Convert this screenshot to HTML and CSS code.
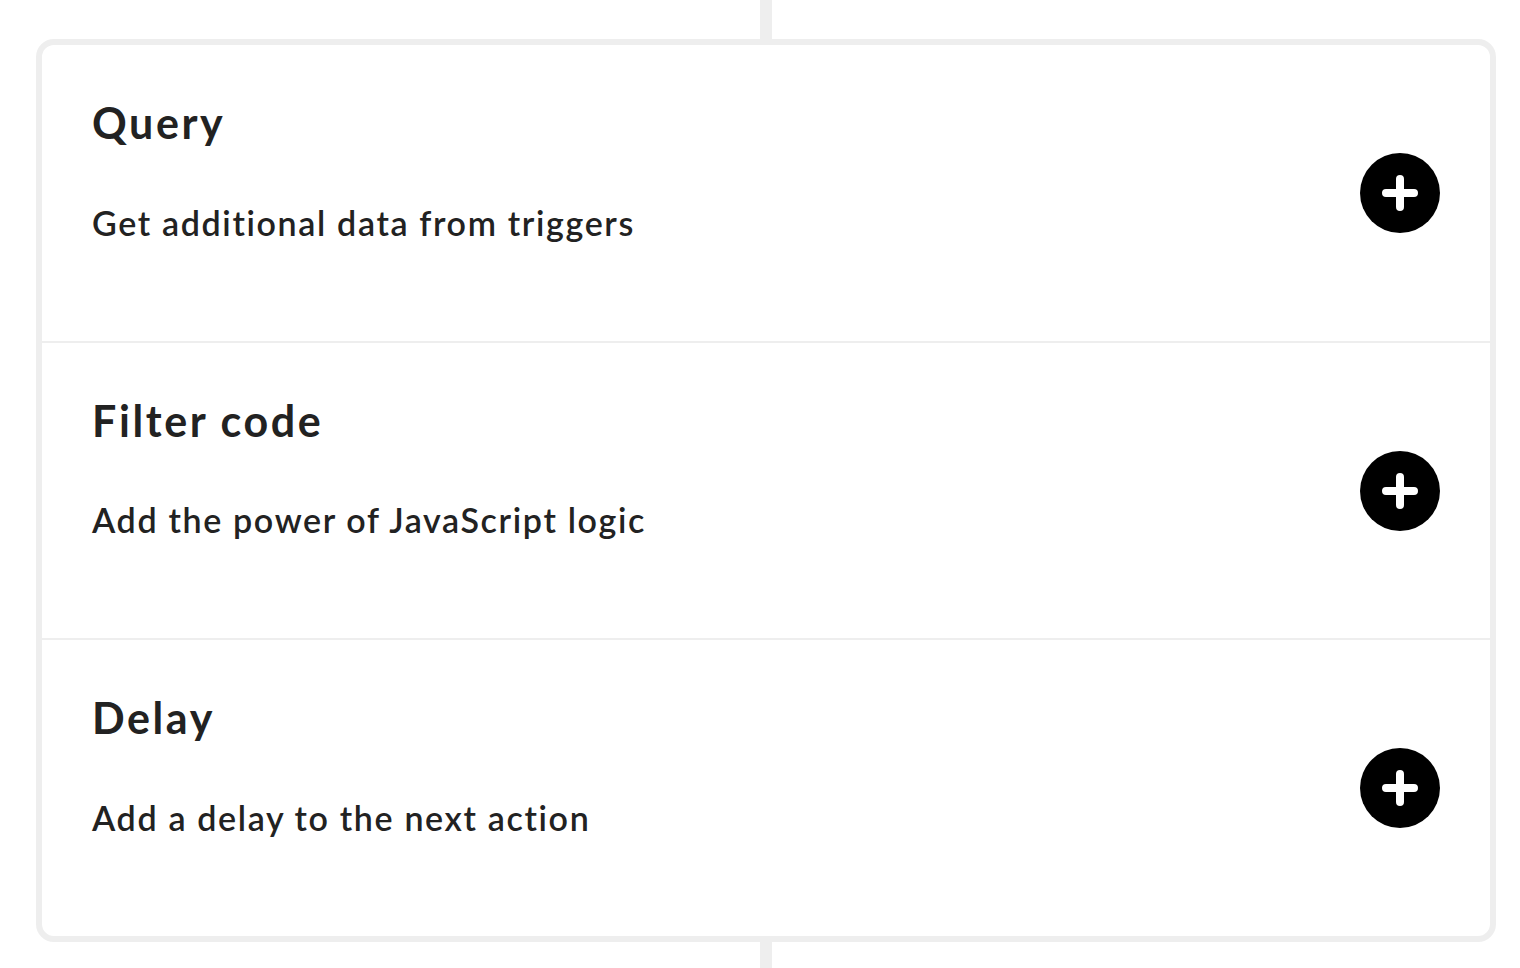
FILE: index.html
```html
<!DOCTYPE html>
<html lang="en">
<head>
<meta charset="utf-8">
<title>Add step</title>
<link rel="stylesheet" href="styles.css">
</head>
<body>
<div class="connector connector-top"></div>
<div class="card">
  <div class="row">
    <div class="text">
      <h2 class="title">Query</h2>
      <p class="desc">Get additional data from triggers</p>
    </div>
    <button class="add" aria-label="Add Query">
      <svg viewBox="0 0 80 80" width="80" height="80"><circle cx="40" cy="40" r="40" fill="#000"/><path d="M26 40H54M40 26V54" stroke="#fff" stroke-width="8" stroke-linecap="round" fill="none"/></svg>
    </button>
  </div>
  <div class="row">
    <div class="text">
      <h2 class="title">Filter code</h2>
      <p class="desc">Add the power of JavaScript logic</p>
    </div>
    <button class="add" aria-label="Add Filter code">
      <svg viewBox="0 0 80 80" width="80" height="80"><circle cx="40" cy="40" r="40" fill="#000"/><path d="M26 40H54M40 26V54" stroke="#fff" stroke-width="8" stroke-linecap="round" fill="none"/></svg>
    </button>
  </div>
  <div class="row">
    <div class="text">
      <h2 class="title">Delay</h2>
      <p class="desc">Add a delay to the next action</p>
    </div>
    <button class="add" aria-label="Add Delay">
      <svg viewBox="0 0 80 80" width="80" height="80"><circle cx="40" cy="40" r="40" fill="#000"/><path d="M26 40H54M40 26V54" stroke="#fff" stroke-width="8" stroke-linecap="round" fill="none"/></svg>
    </button>
  </div>
</div>
<div class="connector connector-bottom"></div>
</body>
</html>
```

FILE: styles.css
```css
html, body {
  margin: 0;
  padding: 0;
  background: #fff;
}
body {
  font-family: Lato, "Open Sans", "Liberation Sans", sans-serif;
  color: #222;
  width: 1520px;
  height: 968px;
  overflow: hidden;
}
.connector {
  width: 12px;
  margin-left: 760px;
  background: #eee;
}
.connector-top {
  height: 39px;
}
.connector-bottom {
  height: 26px;
}
.card {
  margin: 0 24px 0 36px;
  border: 6px solid #eee;
  border-radius: 18px;
  background: #fff;
  box-sizing: border-box;
  height: 903px;
  display: flex;
  flex-direction: column;
}
.row {
  flex: 1;
  display: flex;
  align-items: center;
  justify-content: space-between;
  padding: 0 50px;
}
.row + .row {
  border-top: 2px solid #eee;
}
.text {
  align-self: flex-start;
  padding-top: 52px;
}
.title {
  margin: 0;
  font-size: 43px;
  line-height: 1.2;
  font-weight: 700;
  letter-spacing: 2.6px;
}
.desc {
  margin: 54px 0 0;
  font-size: 34px;
  line-height: 1.2;
  font-weight: 600;
  letter-spacing: 1.65px;
}
.add {
  width: 80px;
  height: 80px;
  padding: 0;
  border: 0;
  background: none;
  display: block;
  cursor: pointer;
}
.add svg {
  display: block;
}
```
